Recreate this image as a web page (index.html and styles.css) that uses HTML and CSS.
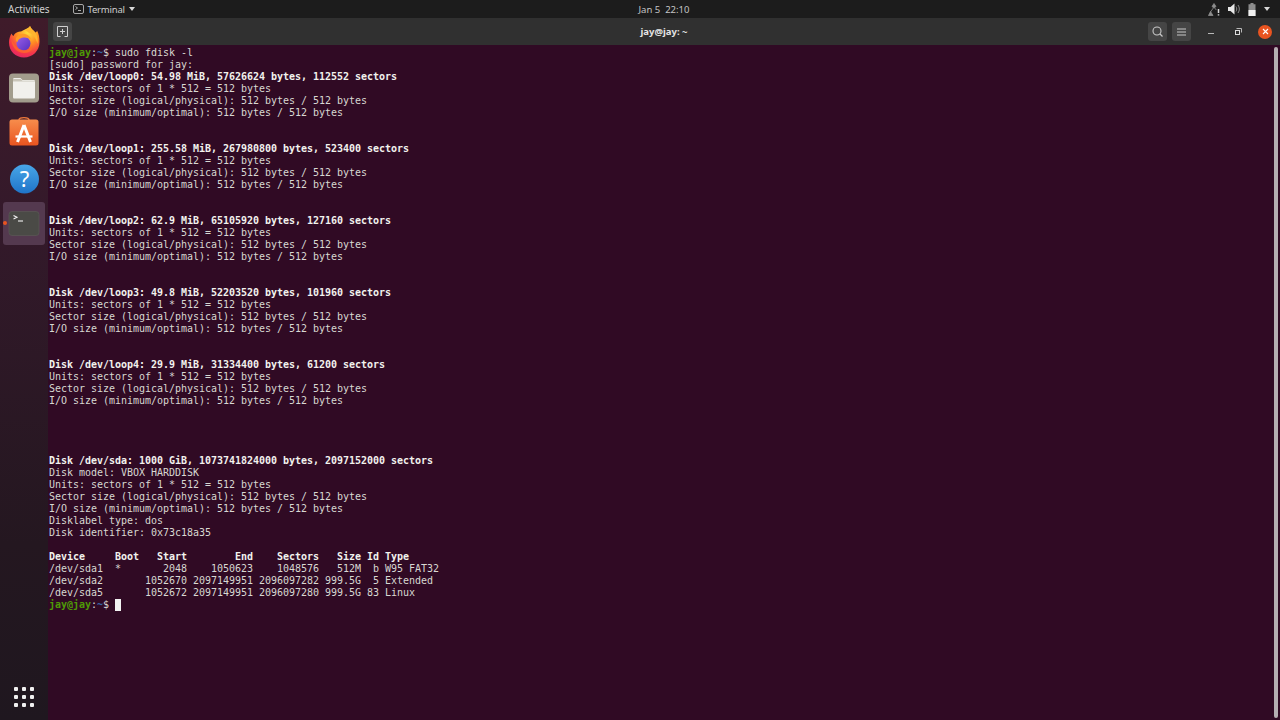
FILE: index.html
```html
<!DOCTYPE html>
<html lang="en">
<head>
<meta charset="utf-8">
<title>jay@jay: ~</title>
<link rel="stylesheet" href="styles.css">
</head>
<body>
<header class="topbar">
  <div class="top-left">
    <span class="activities">Activities</span>
    <span class="app-menu">
      <svg class="app-glyph" width="11" height="10" viewBox="0 0 11 10"><rect x="0.5" y="0.5" width="10" height="9" rx="1.500" fill="none" stroke="#a8a8a8"/><path d="M2.500 2.500l2 1.500-2 1.500M5 6.500H8" fill="none" stroke="#bdbdbd" stroke-width=".9"/></svg>
      <span class="app-name">Terminal</span>
      <i class="caret"></i>
    </span>
  </div>
  <div class="clock">Jan 5&nbsp; 22:10</div>
  <div class="tray">
    <svg width="14" height="13" viewBox="0 0 14 13"><path d="M6 .5 8 3.500 6 5 4 3.500ZM5.300 5 2.500 9M2.500 8.500 .5 12.500H5ZM6.700 5l1.600 2" fill="#8d8d8d" stroke="#8d8d8d" stroke-width=".8"/><path d="M10.500 6v4M10.500 11.300v1.200" stroke="#d8d8d8" stroke-width="1.500"/></svg>
    <svg width="14" height="12" viewBox="0 0 14 12"><path d="M0 4h2.500L6.500 .5v11L2.500 8H0Z" fill="#e8e8e8"/><path d="M8 3.500c1 1.500 1 3.500 0 5M10 2c1.800 2.500 1.800 5.500 0 8" fill="none" stroke="#8a8a8a" stroke-width="1"/></svg>
    <svg width="8" height="13" viewBox="0 0 8 13"><path d="M2.500 0h3v1.200H7.500V13H.5V1.200H2.500Z" fill="#8c8c8c"/><rect x=".5" y="7" width="7" height="6" fill="#f0f0f0"/></svg>
    <i class="caret caret-tray"></i>
  </div>
</header>

<div class="desktop">
  <nav class="dock">
    <div class="dock-apps">
      <div class="tile">
        <svg class="icon" width="32" height="32" viewBox="0 0 32 32">
          <defs>
            <radialGradient id="ff" cx=".62" cy=".2" r=".9"><stop offset="0" stop-color="#ffe03c"/><stop offset=".42" stop-color="#ff8a22"/><stop offset=".75" stop-color="#f5364a"/><stop offset="1" stop-color="#dc2170"/></radialGradient>
            <linearGradient id="ffp" x1="0" y1="0" x2="1" y2="1"><stop offset="0" stop-color="#9a5fe8"/><stop offset="1" stop-color="#5530c0"/></linearGradient>
            <linearGradient id="store" x1="0" y1="0" x2="0" y2="1"><stop offset="0" stop-color="#f78d4c"/><stop offset="1" stop-color="#e95420"/></linearGradient>
            <linearGradient id="help" x1="0" y1="0" x2="0" y2="1"><stop offset="0" stop-color="#48a6e8"/><stop offset="1" stop-color="#1f74c8"/></linearGradient>
          </defs>
          <path d="M22 -2C23 1 25.500 2 27.500 4.500 28.500 3.800 29 3.500 29 2.500 31 6 31.500 10 31.500 14 31.500 23 24.500 29.500 16 29.500 7.500 29.500 1 23 1 14.500 1 11 2 8 3.500 5.500 4 6.500 4.500 7.500 5.500 8 7 4.500 10.500 3.500 13 3.500 17 1.500 20.500 0 22 -2Z" fill="url(#ff)"/>
          <path d="M17 2C20 1 22 0 22 -2 23 1 26 3 28 6 30 9 30 12 29.500 16 28 10 25 6 21 5Z" fill="#ffb52e"/>
          <circle cx="15.500" cy="15.500" r="7" fill="url(#ffp)"/>
          <path d="M8 10C10 6.500 13 5 17 6 20 6.700 22.500 8.500 23 11.500 20.500 9.500 17 9 14 9.800 11.500 10.500 10 12 9.500 14 8 13.500 7.500 12 8 10Z" fill="#ff9a26"/>
          <path d="M3.500 12C4 20 10 25.500 17 25 22 24.500 25 21.500 25 17 23.500 20.500 20 22.800 16 22.300 10.500 21.800 6.500 18 3.500 12Z" fill="#ff6a2a" opacity=".75"/>
        </svg>
      </div>
      <div class="tile">
        <svg class="icon" width="32" height="32" viewBox="0 0 32 32">
          <rect x="1" y="0.500" width="30" height="29" rx="4" fill="#a29c8c"/>
          <path d="M5 6.500C5 5.500 5.500 5 6.500 5H12.500L14.500 7H25.500C26.500 7 27 7.500 27 8.500V24C27 25 26.500 25.500 25.500 25.500H6.500C5.500 25.500 5 25 5 24Z" fill="#f1f0ec"/>
          <path d="M5 8.500H27V7.800H14.500L12.500 6H5Z" fill="#c9c5b9"/>
        </svg>
      </div>
      <div class="tile">
        <svg class="icon" width="32" height="32" viewBox="0 0 32 32">
          <path d="M11 4V2C11 .2 13 -.4 16 -.4 19 -.4 21 .2 21 2V4" fill="none" stroke="#ef7a3c" stroke-width="1.400"/>
          <rect x="1.500" y="1.500" width="29" height="26" rx="2.500" fill="url(#store)"/>
          <path d="M16 7 9.500 24M16 7 22.500 24" fill="none" stroke="#fff" stroke-width="3"/>
          <path d="M7.500 18.500H24.500" fill="none" stroke="#fff" stroke-width="2.200"/>
        </svg>
      </div>
      <div class="tile">
        <svg class="icon" width="32" height="32" viewBox="0 0 32 32">
          <circle cx="16.500" cy="16" r="14.500" fill="url(#help)"/>
          <text class="help-mark" x="16.500" y="23.500" text-anchor="middle">?</text>
        </svg>
      </div>
      <div class="tile tile-active">
        <i class="running-dot"></i>
        <svg class="icon" width="32" height="32" viewBox="0 0 32 32">
          <rect x="1" y="3.500" width="30" height="24" rx="3" fill="#4a4a46" stroke="#5c5c58" stroke-width=".6"/>
          <path d="M5.500 7.500 9 9.300 5.500 11" fill="none" stroke="#f2f2f2" stroke-width="1.100"/>
          <path d="M10 13H15" stroke="#f2f2f2" stroke-width="1.100"/>
        </svg>
      </div>
    </div>
    <div class="app-grid">
      <i></i><i></i><i></i><i></i><i></i><i></i><i></i><i></i><i></i>
    </div>
  </nav>

  <main class="window">
    <div class="titlebar">
      <div class="tb-side">
        <span class="tb-btn">
          <svg width="11" height="11" viewBox="0 0 11 11"><path d="M.5 10.500V.5H10.500V10.500" fill="none" stroke="#d0d0d0"/><path d="M5.500 3v5M3 5.500h5" stroke="#d0d0d0"/><path d="M.5 10.500h3M7.500 10.500h3" stroke="#d0d0d0"/></svg>
        </span>
      </div>
      <div class="tb-title">jay@jay: ~</div>
      <div class="tb-side tb-right">
        <span class="tb-btn">
          <svg width="11" height="11" viewBox="0 0 11 11"><circle cx="5" cy="5" r="4" fill="none" stroke="#c8c8c8" stroke-width="1.100"/><path d="M8 8l2.500 2.500" stroke="#c8c8c8" stroke-width="1.200"/></svg>
        </span>
        <span class="tb-btn">
          <svg width="9" height="8" viewBox="0 0 9 8"><path d="M0 1h9M0 4h9M0 7h9" stroke="#c8c8c8"/></svg>
        </span>
        <span class="win-ctl"><i class="win-min"></i></span>
        <span class="win-ctl">
          <svg width="7" height="7" viewBox="0 0 7 7"><path d="M1.500 .5H6.500V4.500" fill="none" stroke="#b8b8b8"/><rect x=".5" y="2.500" width="4" height="4" fill="none" stroke="#dcdcdc"/></svg>
        </span>
        <span class="win-ctl win-close">
          <svg width="7" height="7" viewBox="0 0 7 7"><path d="M1 1l5 5M6 1l-5 5" stroke="#fff" stroke-width="1.100"/></svg>
        </span>
      </div>
    </div>
    <div class="terminal">
<pre class="output"><span class="pr-user">jay@jay</span>:<span class="pr-path">~</span>$ sudo fdisk -l
[sudo] password for jay:
<b>Disk /dev/loop0: 54.98 MiB, 57626624 bytes, 112552 sectors</b>
Units: sectors of 1 * 512 = 512 bytes
Sector size (logical/physical): 512 bytes / 512 bytes
I/O size (minimum/optimal): 512 bytes / 512 bytes


<b>Disk /dev/loop1: 255.58 MiB, 267980800 bytes, 523400 sectors</b>
Units: sectors of 1 * 512 = 512 bytes
Sector size (logical/physical): 512 bytes / 512 bytes
I/O size (minimum/optimal): 512 bytes / 512 bytes


<b>Disk /dev/loop2: 62.9 MiB, 65105920 bytes, 127160 sectors</b>
Units: sectors of 1 * 512 = 512 bytes
Sector size (logical/physical): 512 bytes / 512 bytes
I/O size (minimum/optimal): 512 bytes / 512 bytes


<b>Disk /dev/loop3: 49.8 MiB, 52203520 bytes, 101960 sectors</b>
Units: sectors of 1 * 512 = 512 bytes
Sector size (logical/physical): 512 bytes / 512 bytes
I/O size (minimum/optimal): 512 bytes / 512 bytes


<b>Disk /dev/loop4: 29.9 MiB, 31334400 bytes, 61200 sectors</b>
Units: sectors of 1 * 512 = 512 bytes
Sector size (logical/physical): 512 bytes / 512 bytes
I/O size (minimum/optimal): 512 bytes / 512 bytes




<b>Disk /dev/sda: 1000 GiB, 1073741824000 bytes, 2097152000 sectors</b>
Disk model: VBOX HARDDISK
Units: sectors of 1 * 512 = 512 bytes
Sector size (logical/physical): 512 bytes / 512 bytes
I/O size (minimum/optimal): 512 bytes / 512 bytes
Disklabel type: dos
Disk identifier: 0x73c18a35

<b>Device     Boot   Start        End    Sectors   Size Id Type</b>
/dev/sda1  *       2048    1050623    1048576   512M  b W95 FAT32
/dev/sda2       1052670 2097149951 2096097282 999.5G  5 Extended
/dev/sda5       1052672 2097149951 2096097280 999.5G 83 Linux
<span class="pr-user">jay@jay</span>:<span class="pr-path">~</span>$ <span class="cursor"> </span></pre>
      <div class="scrollbar"></div>
    </div>
  </main>
</div>
</body>
</html>
```
FILE: styles.css
```css
* { box-sizing: border-box; }
html, body { margin: 0; height: 100%; overflow: hidden; }
body {
  width: 1280px;
  height: 720px;
  display: flex;
  flex-direction: column;
  background: #300a24;
  font-family: "Noto Sans", "Open Sans", sans-serif;
}
.topbar {
  height: 18px;
  flex: none;
  display: grid;
  grid-template-columns: 1fr auto 1fr;
  align-items: center;
  background: #1c1c1c;
  color: #cfcfcf;
  font-size: 10px;
  padding: 0 8px;
}
.top-left { display: flex; align-items: center; gap: 23.500px; }
.activities { width: 41px; white-space: nowrap; }
.app-menu { display: flex; align-items: center; gap: 4px; }
.app-name { font-size: 9.500px; letter-spacing: -.2px; }
.caret {
  width: 0; height: 0;
  border-left: 3.500px solid transparent;
  border-right: 3.500px solid transparent;
  border-top: 4px solid #d8d8d8;
}
.clock { margin-left: 48px; color: #c4c4c4; font-size: 9.500px; }
.tray { display: flex; align-items: center; justify-content: flex-end; gap: 6px; padding-right: 2px; }
.caret-tray { margin-left: 2px; }

.desktop { flex: 1; display: flex; min-height: 0; }
.dock {
  width: 48px;
  flex: none;
  display: flex;
  flex-direction: column;
  justify-content: space-between;
  background: linear-gradient(180deg, #3f1b2a 0%, #33192a 30%, #241720 75%, #1f171f 100%);
  padding: 4px 0 0 3px;
}
.dock-apps { display: flex; flex-direction: column; gap: 2px; }
.tile {
  position: relative;
  width: 42px;
  height: 43px;
  display: flex;
  align-items: center;
  justify-content: center;
  border-radius: 3px;
}
.tile-active { background: #54394f; }
.icon { overflow: visible; }
.help-mark { font: 400 22px "Noto Sans", sans-serif; fill: #fff; }
.running-dot {
  position: absolute;
  left: 0;
  top: 19px;
  width: 4px;
  height: 4px;
  border-radius: 50%;
  background: #e95420;
}
.app-grid {
  width: 20px;
  margin: 0 0 13px 11px;
  display: grid;
  grid-template-columns: repeat(3, 4px);
  grid-auto-rows: 4px;
  gap: 4px;
}
.app-grid i { background: #f0f0f0; border-radius: 1px; }

.window { flex: 1; display: flex; flex-direction: column; min-width: 0; }
.titlebar {
  height: 27px;
  flex: none;
  display: grid;
  grid-template-columns: 1fr auto 1fr;
  align-items: center;
  background: #303030;
  padding: 0 5px;
}
.tb-side { display: flex; align-items: center; gap: 5px; }
.tb-right { justify-content: flex-end; padding-right: 3px; }
.tb-title { color: #e4e4e4; font-size: 9.500px; font-weight: 700; }
.tb-btn {
  width: 19px;
  height: 19px;
  display: flex;
  align-items: center;
  justify-content: center;
  background: #454545;
  border-radius: 3px;
}
.win-ctl {
  width: 14px;
  height: 14px;
  display: flex;
  align-items: center;
  justify-content: center;
  margin-left: 8px;
}
.win-min { width: 6px; height: 1px; background: #b8b8b8; margin-top: 4px; }
.win-close { border-radius: 50%; background: #e95420; }
.terminal {
  flex: 1;
  position: relative;
  background: #300a24;
  min-height: 0;
}
.output {
  margin: 0;
  padding: 2px 0 0 1px;
  font-family: "DejaVu Sans Mono", monospace;
  font-size: 10px;
  line-height: 12px;
  letter-spacing: -.02px;
  color: #d8d8d2;
}
.output b { color: #f2f2ee; font-weight: 700; }
.pr-user { color: #4e9a06; font-weight: 700; }
.pr-path { color: #3465a4; font-weight: 700; }
.cursor { display: inline-block; width: 6px; height: 12px; background: #f2f2f2; vertical-align: top; }
.scrollbar {
  position: absolute;
  top: 2px;
  right: 2px;
  bottom: 2px;
  width: 4px;
  background: #b5aeb2;
  border-radius: 2px;
}
```
